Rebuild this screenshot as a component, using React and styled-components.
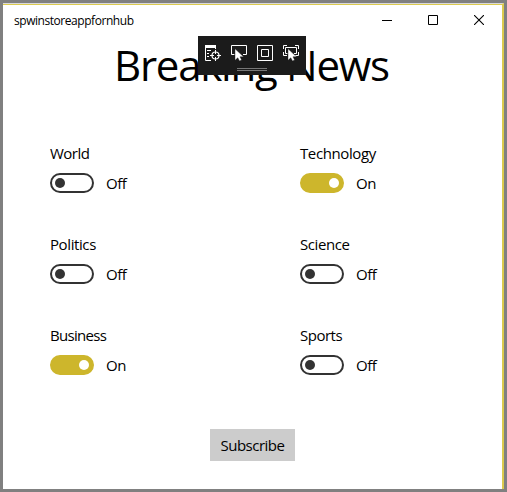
import React, { useState } from "react";
import styled, { createGlobalStyle } from "styled-components";

const GlobalStyle = createGlobalStyle`
  * { box-sizing: border-box; }
  body { margin: 0; background: #808080; font-family: "Open Sans", "Noto Sans", sans-serif; color: #000; overflow: hidden; }
`;

const Desktop = styled.div`
  width: 507px;
  height: 492px;
  padding: 3px;
  background: #808080;
`;

const Window = styled.main`
  position: relative;
  display: flex;
  flex-direction: column;
  width: 501px;
  height: 486px;
  background: #fff;
  border-top: 1px solid #d8d8dc;
  border-right: 2px solid #dccb4e;
`;

const TitleBar = styled.header`
  display: flex;
  align-items: center;
  justify-content: space-between;
  height: 33px;
  padding-left: 11px;
  border-top: 1px solid #dccb4e;
`;

const AppName = styled.span`
  font-size: 12px;
  line-height: 16px;
  letter-spacing: -0.45px;
  padding-bottom: 1px;
`;

const Controls = styled.div`
  display: flex;
`;

const ControlButton = styled.button`
  display: flex;
  align-items: center;
  justify-content: center;
  width: 46px;
  height: 32px;
  padding: 0 0 2px;
  border: 0;
  background: transparent;
`;

const Heading = styled.h1`
  margin: 0 0 0 111px;
  font-size: 42px;
  line-height: 56px;
  font-weight: 400;
  letter-spacing: -1.25px;
  white-space: nowrap;
`;

const DebugBar = styled.div`
  position: absolute;
  left: 195px;
  top: 32px;
  width: 108px;
  height: 39px;
  background: #1b1b1b;
  display: flex;
  flex-direction: column;
  align-items: center;
`;

const DebugIcons = styled.div`
  display: flex;
  gap: 10px;
  padding-top: 9px;
  height: 32px;
  svg { display: block; }
`;

const Grip = styled.div`
  width: 30px;
  height: 3px;
  border-top: 1px solid #777;
  border-bottom: 1px solid #777;
`;

const Topics = styled.section`
  display: grid;
  grid-template-columns: 250px 200px;
  grid-auto-rows: 91px;
  padding: 50px 0 0 47px;
`;

const Topic = styled.div`
  display: flex;
  flex-direction: column;
`;

const Label = styled.span`
  font-size: 15px;
  line-height: 20px;
  letter-spacing: ${(p) => p.$track || 0}px;
`;

const SwitchRow = styled.div`
  display: flex;
  align-items: center;
  gap: 12px;
  margin-top: 10px;
  height: 20px;
`;

const Switch = styled.button`
  display: flex;
  align-items: center;
  justify-content: ${(p) => (p.$on ? "flex-end" : "flex-start")};
  width: 44px;
  height: 20px;
  padding: 0 3px;
  border: 2px solid ${(p) => (p.$on ? "#cdb62c" : "#333")};
  border-radius: 10px;
  background: ${(p) => (p.$on ? "#cdb62c" : "#fff")};
`;

const Knob = styled.span`
  width: 10px;
  height: 10px;
  border-radius: 50%;
  background: ${(p) => (p.$on ? "#fff" : "#333")};
`;

const Subscribe = styled.button`
  width: 85px;
  height: 32px;
  margin: 13px 0 0 207px;
  padding: 0;
  border: 0;
  background: #ccc;
  color: #000;
  font: 15px/32px "Open Sans", "Noto Sans", sans-serif;
  letter-spacing: -0.5px;
`;

const Cursor = ({ x, y }) => (
  <path
    transform={`translate(${x} ${y})`}
    d="M0 0V11.5L2.8 9L4.5 12.2L6.6 11.2L5 8H8.6Z"
    fill="#fff"
    stroke="#1b1b1b"
    strokeWidth=".4"
  />
);

const TreeIcon = () => (
  <svg width="16" height="16" viewBox="0 0 16 16" fill="none" stroke="#fff">
    <path d="M0 0H11V3H0Z" fill="#fff" stroke="none" />
    <path d="M.5 0V15.5H6M10.5 2V4M2 5.5H6M2 8.5H4M2 11.5H4" />
    <circle cx="10.5" cy="10.5" r="3.5" strokeWidth="1.2" />
    <path d="M10.5 5V9M10.5 12V16M5 10.5H9M12 10.5H16" />
  </svg>
);

const SelectIcon = () => (
  <svg width="16" height="16" viewBox="0 0 16 16" fill="none" stroke="#fff">
    <path d="M3.5 9.5H.5V.5H15.5V9.5H12" />
    <Cursor x={4} y={3.8} />
  </svg>
);

const AdornersIcon = () => (
  <svg width="16" height="16" viewBox="0 0 16 16" fill="none" stroke="#fff">
    <path d="M.5.5H15.5V15.5H.5ZM4.5 4.5H11.5V11.5H4.5Z" />
  </svg>
);

const FocusIcon = () => (
  <svg width="16" height="16" viewBox="0 0 16 16" fill="none" stroke="#fff">
    <path d="M.5 4V.5H4M12 .5H15.5V4M.5 7V10.5H4M12 10.5H15.5V7M4.5 8.5H2.5V2.5H13.5V8.5H11" />
    <Cursor x={5} y={3.8} />
  </svg>
);

const topics = [
  { name: "World", track: -0.5 },
  { name: "Technology", on: true, track: -0.4 },
  { name: "Politics", track: -0.4 },
  { name: "Science", track: -0.4 },
  { name: "Business", on: true, track: -0.7 },
  { name: "Sports", track: -0.5 },
];

function TopicToggle({ name, on: initial = false, track }) {
  const [on, setOn] = useState(initial);
  return (
    <Topic>
      <Label $track={track}>{name}</Label>
      <SwitchRow>
        <Switch $on={on} role="switch" aria-checked={on} aria-label={name} onClick={() => setOn(!on)}>
          <Knob $on={on} />
        </Switch>
        <Label $track={-0.5}>{on ? "On" : "Off"}</Label>
      </SwitchRow>
    </Topic>
  );
}

export default function App() {
  return (
    <Desktop>
      <GlobalStyle />
      <Window>
        <TitleBar>
          <AppName>spwinstoreappfornhub</AppName>
          <Controls>
            <ControlButton aria-label="Minimize">
              <svg width="10" height="10"><path d="M0 5.5H10" stroke="#000" /></svg>
            </ControlButton>
            <ControlButton aria-label="Maximize">
              <svg width="10" height="10"><path d="M.5.5H9.5V9.5H.5Z" fill="none" stroke="#000" /></svg>
            </ControlButton>
            <ControlButton aria-label="Close">
              <svg width="10" height="10"><path d="M0 0L10 10M10 0L0 10" stroke="#000" strokeWidth="1.1" /></svg>
            </ControlButton>
          </Controls>
        </TitleBar>
        <Heading>Breaking News</Heading>
        <Topics>
          {topics.map((t) => <TopicToggle key={t.name} {...t} />)}
        </Topics>
        <Subscribe>Subscribe</Subscribe>
        <DebugBar>
          <DebugIcons>
            <TreeIcon />
            <SelectIcon />
            <AdornersIcon />
            <FocusIcon />
          </DebugIcons>
          <Grip />
        </DebugBar>
      </Window>
    </Desktop>
  );
}
